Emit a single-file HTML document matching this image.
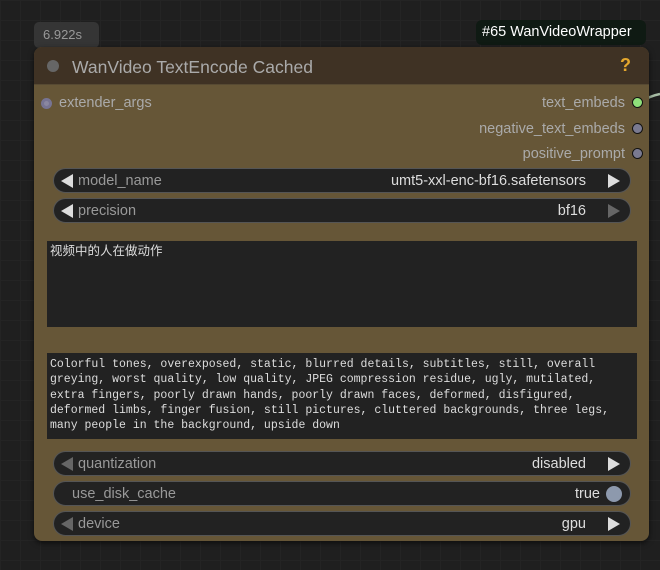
<!DOCTYPE html>
<html><head><meta charset="utf-8"><style>
*{margin:0;padding:0;box-sizing:border-box}
body{width:660px;height:570px;background:#1f1f1f;position:relative;overflow:hidden;font-family:"Liberation Sans","Noto Sans CJK SC",sans-serif;
background-image:linear-gradient(#242424 1px,transparent 1px),linear-gradient(90deg,#242424 1px,transparent 1px);background-size:20px 20px;}
.abs{position:absolute}
.time{left:34px;top:22px;width:65px;height:26px;background:#353535;border-radius:5px;color:#999;font-size:13px;padding:5px 0 0 9px}
.badge{left:476px;top:20px;width:170px;height:25px;background:#0f1a13;border-radius:6px;color:#fff;font-size:14.5px;padding:4px 0 0 6px}
.node{left:34px;top:47px;width:615px;height:494px;background:#665637;border-radius:8px;box-shadow:0 2px 6px rgba(0,0,0,.6)}
.title{left:0;top:0;width:615px;height:38px;background:#3f3224;border-radius:8px 8px 0 0;border-bottom:1px solid #574a33}
.title span{position:absolute;left:38px;top:10px;color:#aaa;font-size:17.5px}
.dot{border-radius:50%}
.lbl{color:#aaa;font-size:14.5px}
.w{left:19px;width:578px;height:25px;background:#222;border:1px solid #555;border-radius:13px;font-size:14.5px}
.w .n{position:absolute;left:24px;top:4px;color:#999}
.w .v{position:absolute;right:44px;top:4px;color:#ddd}
.w .l{position:absolute;left:7px;top:5px;width:0;height:0;border-top:7px solid transparent;border-bottom:7px solid transparent;border-right:12px solid #ddd}
.w .r{position:absolute;right:10px;top:5px;width:0;height:0;border-top:7px solid transparent;border-bottom:7px solid transparent;border-left:12px solid #ddd}
.ta{left:13px;width:590px;background:#222;color:#ddd;font-family:"Liberation Mono","Noto Sans CJK SC",monospace;font-size:11.5px;line-height:15.3px;padding:4px 3px;white-space:pre}
</style></head><body>
<svg class="abs" style="left:640px;top:90px" width="20" height="20"><path d="M0 12 Q10 6 20 4" stroke="#a9bfa7" stroke-width="2.5" fill="none"/></svg>
<div class="abs time">6.922s</div>
<div class="abs badge">#65 WanVideoWrapper</div>
<div class="abs node">
 <div class="abs title"><div class="abs dot" style="left:13px;top:13px;width:12px;height:12px;background:#666"></div><span>WanVideo TextEncode Cached</span><b class="abs" style="right:18px;top:8px;color:#e4a72d;font-size:18px">?</b></div>
 <div class="abs dot" style="left:7px;top:51px;width:11px;height:11px;background:#8a87a0;border:3px solid #777493"></div>
 <div class="abs lbl" style="left:25px;top:48px">extender_args</div>
 <div class="abs lbl" style="right:24px;top:48px">text_embeds</div>
 <div class="abs dot" style="right:6px;top:50px;width:11px;height:11px;background:#8fe07a;border:1px solid #111"></div>
 <div class="abs lbl" style="right:24px;top:74px">negative_text_embeds</div>
 <div class="abs dot" style="right:6px;top:76px;width:11px;height:11px;background:#7a7a90;border:1px solid #111"></div>
 <div class="abs lbl" style="right:24px;top:99px">positive_prompt</div>
 <div class="abs dot" style="right:6px;top:101px;width:11px;height:11px;background:#7a7a90;border:1px solid #111"></div>
 <div class="abs w" style="top:121px"><i class="l"></i><span class="n">model_name</span><span class="v">umt5-xxl-enc-bf16.safetensors</span><i class="r"></i></div>
 <div class="abs w" style="top:151px"><i class="l"></i><span class="n">precision</span><span class="v">bf16</span><i class="r" style="border-left-color:#666"></i></div>
 <div class="abs ta" style="top:194px;height:86px;font-size:12.5px">视频中的人在做动作</div>
 <div class="abs ta" style="top:306px;height:86px">Colorful tones, overexposed, static, blurred details, subtitles, still, overall
greying, worst quality, low quality, JPEG compression residue, ugly, mutilated,
extra fingers, poorly drawn hands, poorly drawn faces, deformed, disfigured,
deformed limbs, finger fusion, still pictures, cluttered backgrounds, three legs,
many people in the background, upside down</div>
 <div class="abs w" style="top:404px"><i class="l" style="border-right-color:#666"></i><span class="n">quantization</span><span class="v">disabled</span><i class="r"></i></div>
 <div class="abs w" style="top:434px"><span class="n" style="left:18px">use_disk_cache</span><span class="v" style="right:30px">true</span><div class="abs dot" style="right:8px;top:4px;width:16px;height:16px;background:#8d99ad"></div></div>
 <div class="abs w" style="top:464px"><i class="l" style="border-right-color:#666"></i><span class="n">device</span><span class="v">gpu</span><i class="r"></i></div>
</div>
</body></html>
